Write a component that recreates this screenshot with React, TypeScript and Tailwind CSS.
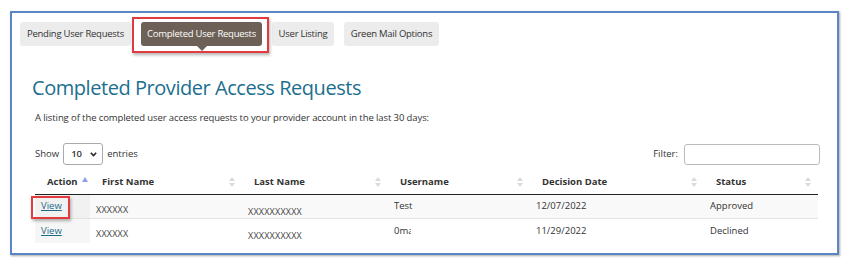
import React from "react";

function SortBoth() {
  return (
    <svg width="6" height="10" viewBox="0 0 6 10" className="shrink-0">
      <path d="M3 0 L6 4 L0 4 Z" fill="#dcdcdc" />
      <path d="M3 10 L6 6 L0 6 Z" fill="#dcdcdc" />
    </svg>
  );
}

function SortAsc() {
  return (
    <svg width="6" height="10" viewBox="0 0 6 10" className="shrink-0">
      <path d="M3 0 L6 5 L0 5 Z" fill="#8f9ee6" />
    </svg>
  );
}

const font = { fontFamily: '"Open Sans", "Noto Sans", Arial, sans-serif' };

export default function App() {
  const rows = [
    { user: "Test", clip: false, date: "12/07/2022", status: "Approved" },
    { user: "0ma", clip: true, date: "11/29/2022", status: "Declined" },
  ];
  return (
    <div className="w-[850px] h-[263px] bg-white pt-[11px] pl-[10px] text-[#333]" style={font}>
      <div className="w-[829px] h-[244px] border-2 border-[#5a86c3] shadow-[1px_1px_2px_rgba(0,0,0,0.35)] pt-[9px] pl-[8px]">
        {/* Tabs */}
        <div className="flex gap-[10px] h-[24px] text-[9.5px] tracking-[-0.25px] whitespace-nowrap">
          <div className="h-[24px] w-[111px] flex items-center justify-center rounded-[3px] bg-[#ececec]">
            Pending User Requests
          </div>
          <div className="relative">
            <div className="h-[24px] w-[121px] flex items-center justify-center rounded-[3px] bg-[#6c6057] text-white">
              Completed User Requests
            </div>
            <div className="absolute left-1/2 -translate-x-1/2 top-[24px] w-0 h-0 border-l-[5px] border-r-[5px] border-t-[5px] border-l-transparent border-r-transparent border-t-[#6c6057]" />
            <div className="absolute -left-[9px] -right-[7px] -top-[5px] -bottom-[7px] border-2 border-[#e23b3f] shadow-[1px_2px_3px_rgba(0,0,0,0.3)]" />
          </div>
          <div className="h-[24px] w-[62px] flex items-center justify-center rounded-[3px] bg-[#ececec]">
            User Listing
          </div>
          <div className="h-[24px] w-[95px] flex items-center justify-center rounded-[3px] bg-[#ececec]">
            Green Mail Options
          </div>
        </div>

        <div className="pl-[15px] pr-[17px]">
          <h1 className="mt-[28px] ml-[-3px] text-[20px] leading-[27px] text-[#1c6f8f] tracking-[-0.45px]">
            Completed Provider Access Requests
          </h1>
          <p className="mt-[10px] text-[9.5px] leading-[14px] tracking-[-0.1px]">
            A listing of the completed user access requests to your provider account in the last 30 days:
          </p>

          <div className="mt-[18px] flex items-center justify-between text-[9.5px] h-[22px]">
            <div className="flex items-center gap-[4px]">
              <span>Show</span>
              <div className="w-[40px] h-[22px] border border-[#aaa] rounded-[3px] flex items-center justify-between pl-[7px] pr-[5px] font-semibold">
                <span>10</span>
                <svg width="7" height="5" viewBox="0 0 7 5">
                  <path d="M0.8 0.8 L3.5 3.6 L6.2 0.8" stroke="#222" strokeWidth="1.5" fill="none" />
                </svg>
              </div>
              <span>entries</span>
            </div>
            <div className="flex items-center gap-[6px]">
              <span>Filter:</span>
              <div className="w-[136px] h-[21px] border border-[#bbb] rounded-[3px]" />
            </div>
          </div>

          <table className="mt-[5px] w-[783px] table-fixed border-collapse text-[9.5px]">
            <colgroup>
              <col className="w-[55px]" />
              <col className="w-[152px]" />
              <col className="w-[146px]" />
              <col className="w-[142px]" />
              <col className="w-[174px]" />
              <col className="w-[114px]" />
            </colgroup>
            <thead>
              <tr className="h-[24px] border-b border-[#222] font-bold">
                <th className="text-left pl-[12px] pr-[2px]">
                  <div className="flex items-center gap-[4px]">
                    <span>Action</span>
                    <SortAsc />
                  </div>
                </th>
                {["First Name", "Last Name", "Username", "Decision Date", "Status"].map((h) => (
                  <th key={h} className="text-left pl-[12px] pr-[7px]">
                    <div className="flex items-center justify-between">
                      <span>{h}</span>
                      <SortBoth />
                    </div>
                  </th>
                ))}
              </tr>
            </thead>
            <tbody>
              {rows.map((r, i) => (
                <tr key={i} className={i === 0 ? "h-[24px] bg-[#f9f9f9] border-b border-[#e2e2e2]" : "h-[23px] bg-white"}>
                  <td className={i === 0 ? "relative pl-[6px] bg-[#f1f1f1]" : "pl-[6px] bg-[#f6f6f6]"}>
                    <span className="underline text-[#1d6b8a]">View</span>
                    {i === 0 && (
                      <div className="absolute z-10 left-[-4px] top-[1px] w-[39px] h-[23px] border-2 border-[#e23b3f] shadow-[1px_2px_3px_rgba(0,0,0,0.3)]" />
                    )}
                  </td>
                  <td className="pl-[6px] pt-[6px] text-[9px] text-[#444] tracking-[0.2px]">XXXXXX</td>
                  <td className="pl-[6px] pt-[10px] text-[9px] text-[#444] tracking-[0.2px]">XXXXXXXXXX</td>
                  <td className="pl-[6px]">
                    {r.clip ? (
                      <span className="inline-block w-[17px] overflow-hidden whitespace-nowrap align-middle">{r.user}</span>
                    ) : (
                      r.user
                    )}
                  </td>
                  <td className="pl-[6px]">{r.date}</td>
                  <td className="pl-[6px]">{r.status}</td>
                </tr>
              ))}
            </tbody>
          </table>
        </div>
      </div>
    </div>
  );
}
